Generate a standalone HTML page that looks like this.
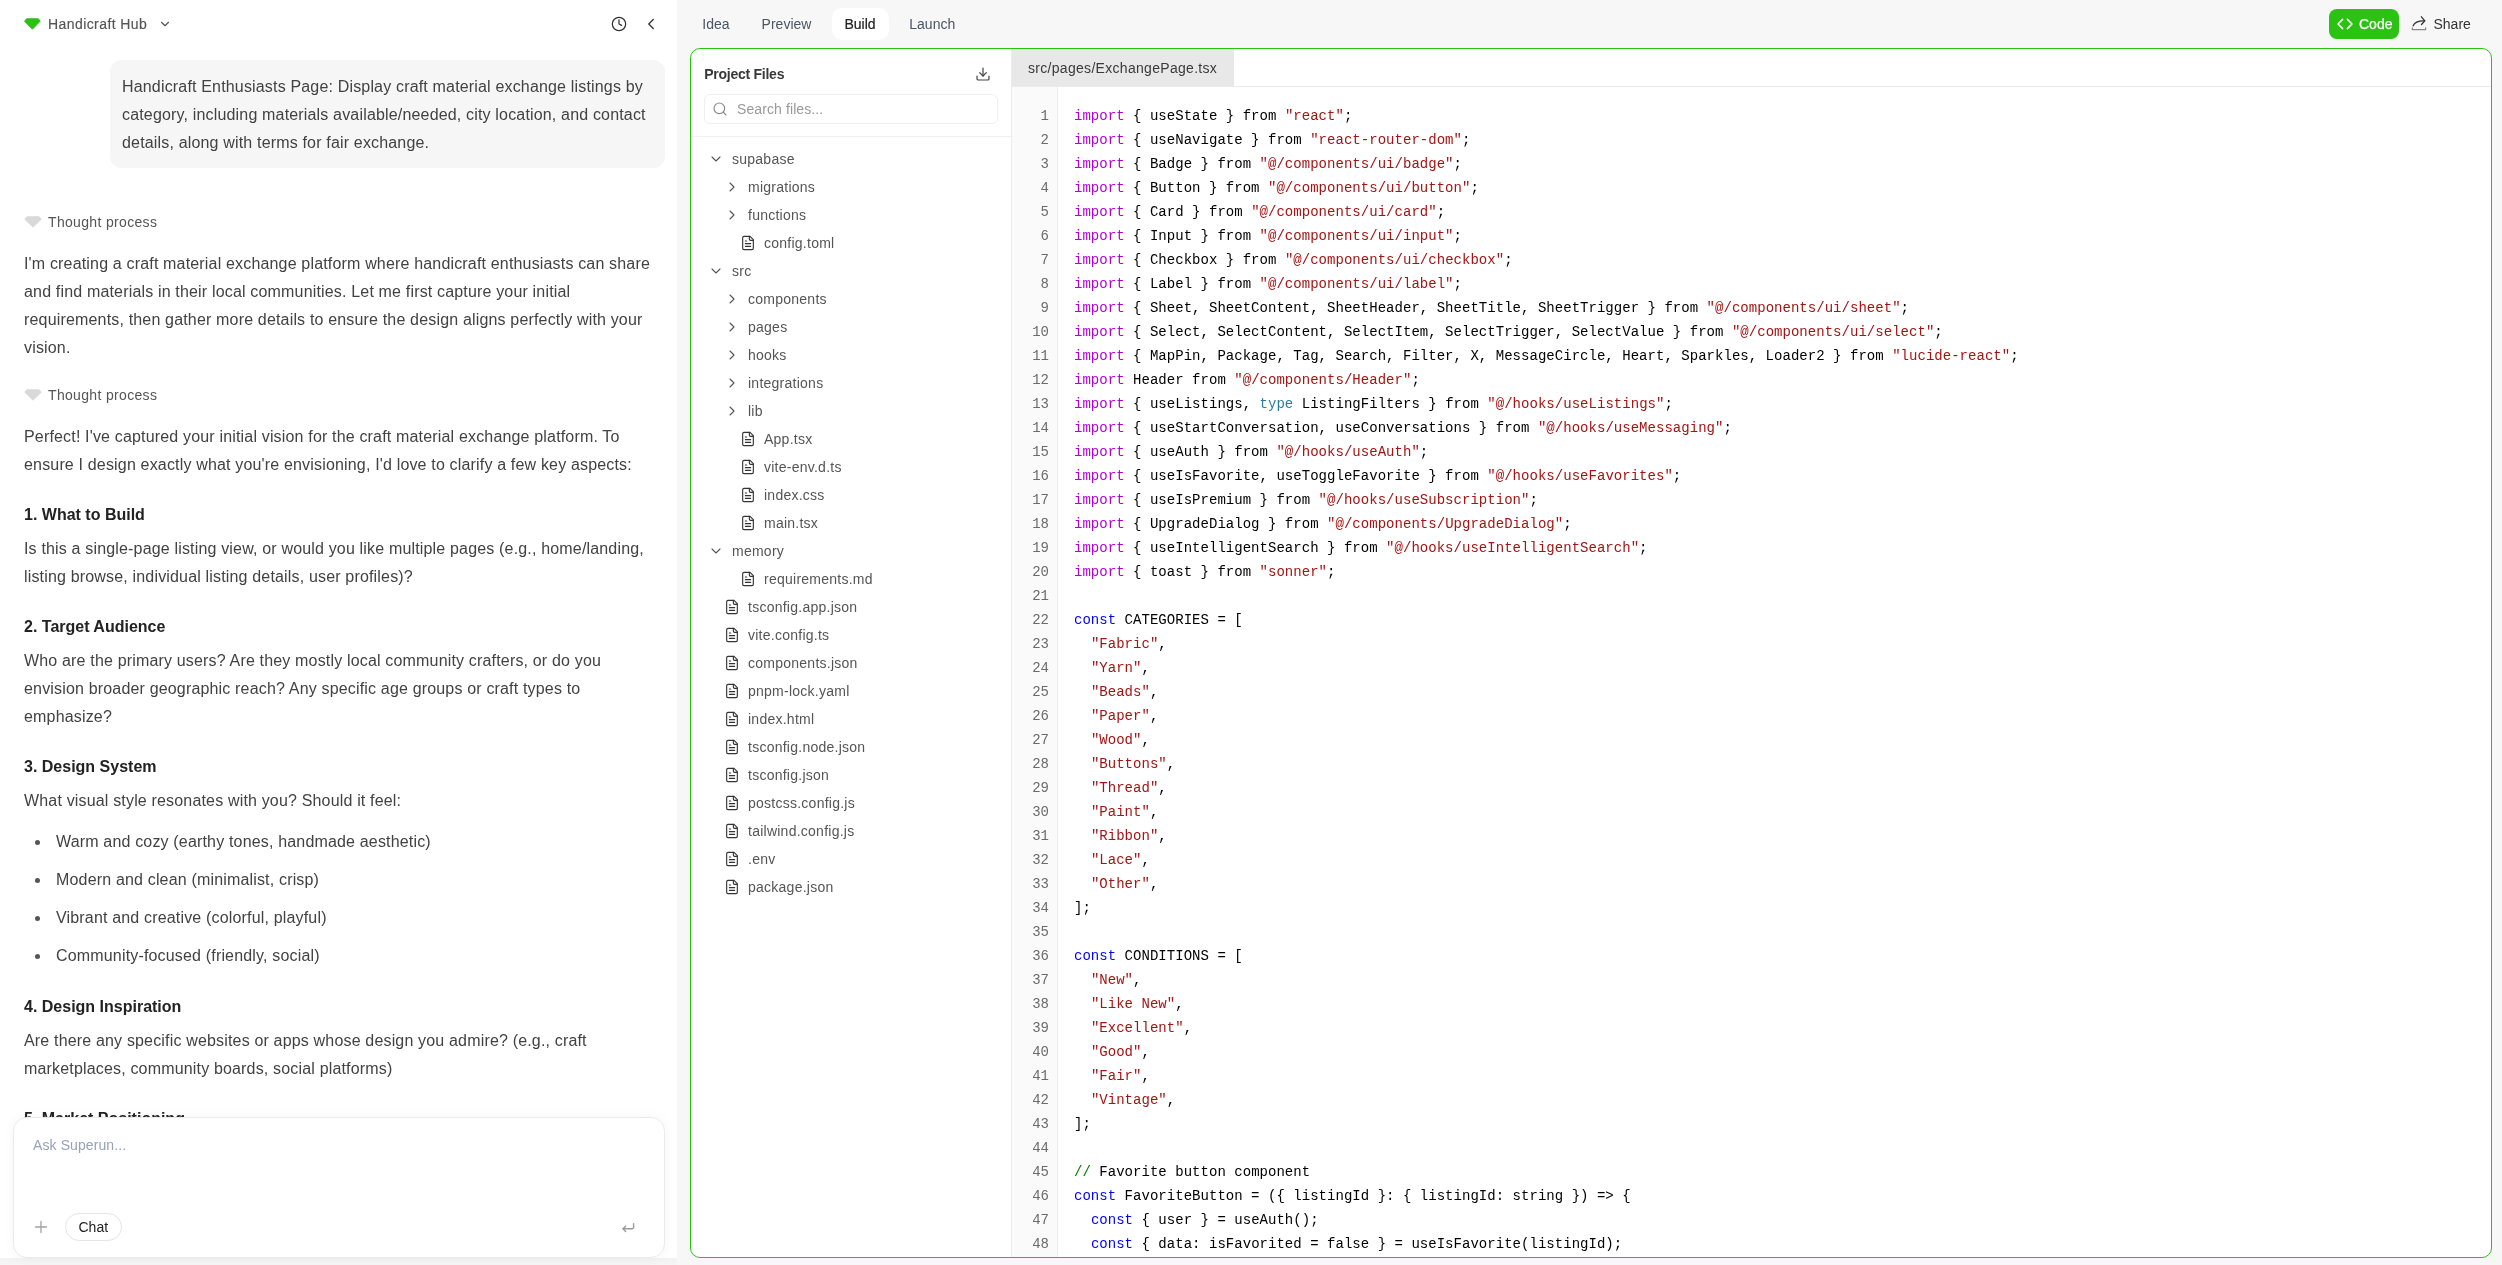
<!DOCTYPE html><html><head><meta charset="utf-8"><style>
*{box-sizing:border-box;margin:0;padding:0}
html,body{width:2502px;height:1265px;overflow:hidden;background:#fff}
body{font-family:"Liberation Sans",sans-serif;position:relative}
.a{position:absolute;white-space:nowrap}
.left{position:absolute;left:0;top:0;width:677px;height:1265px;background:#fff;overflow:hidden}
.right{position:absolute;left:677px;top:0;width:1825px;height:1265px;background:#f7f7f7}
.p{color:#424242;font-size:16px;line-height:28px;letter-spacing:0.17px}
.mono{font-family:"Liberation Mono",monospace;font-size:14px;line-height:24px;white-space:pre;letter-spacing:0.033px}
.k{color:#af00db}.s{color:#a31515}.c{color:#0000ff}.t{color:#267f99}.m{color:#008000}
.h{color:#222;font-size:16px;line-height:28px;font-weight:bold}
</style></head><body><div style="position:absolute;left:0;top:0;width:2502px;height:1265px;will-change:transform;overflow:hidden"><div class="left"><svg class="a" style="left:24px;top:18px" width="17" height="12" viewBox="0 0 17 12"><path d="M2.6 0.8 H14.4 L16.2 3.2 L8.4 11.2 L0.6 3.2 Z" fill="#2bc017" stroke="#2bc017" stroke-width="1" stroke-linejoin="round"/></svg><div class="a" style="left:48px;top:13.85px;font-size:14px;line-height:20px;color:#555;letter-spacing:0.42px;-webkit-text-stroke:0.15px #555">Handicraft Hub</div><svg class="a" style="left:158px;top:17px" width="14" height="14" viewBox="0 0 24 24" fill="none" stroke="#555" stroke-width="2" stroke-linecap="round" stroke-linejoin="round"><path d="m6 9 6 6 6-6"/></svg><svg class="a" style="left:611px;top:16px" width="16" height="16" viewBox="0 0 24 24" fill="none" stroke="#333" stroke-width="1.9" stroke-linecap="round" stroke-linejoin="round"><circle cx="12" cy="12" r="10"/><path d="M12 6v6l4 2"/></svg><svg class="a" style="left:641.5px;top:14.9px" width="18" height="18" viewBox="0 0 24 24" fill="none" stroke="#333" stroke-width="1.75" stroke-linecap="round" stroke-linejoin="round"><path d="m15 18-6-6 6-6"/></svg><div class="a" style="left:110px;top:60px;width:555px;height:108px;background:#f6f6f6;border-radius:12px"></div><div class="a p" style="left:122px;top:72.65px">Handicraft Enthusiasts Page: Display craft material exchange listings by<br>category, including materials available/needed, city location, and contact<br>details, along with terms for fair exchange.</div><svg class="a" style="left:24px;top:216px" width="18" height="12" viewBox="0 0 18 12"><path d="M2.8 0.8 H15.2 L17.2 3.2 L9 11.2 L0.8 3.2 Z" fill="#d9d9d9" stroke="#d9d9d9" stroke-width="1" stroke-linejoin="round"/></svg><div class="a" style="left:48px;top:211.85px;font-size:14px;line-height:20px;color:#555;letter-spacing:0.33px">Thought process</div><div class="a p" style="left:24px;top:249.85px">I&#x27;m creating a craft material exchange platform where handicraft enthusiasts can share<br>and find materials in their local communities. Let me first capture your initial<br>requirements, then gather more details to ensure the design aligns perfectly with your<br>vision.</div><svg class="a" style="left:24px;top:389px" width="18" height="12" viewBox="0 0 18 12"><path d="M2.8 0.8 H15.2 L17.2 3.2 L9 11.2 L0.8 3.2 Z" fill="#d9d9d9" stroke="#d9d9d9" stroke-width="1" stroke-linejoin="round"/></svg><div class="a" style="left:48px;top:385.15px;font-size:14px;line-height:20px;color:#555;letter-spacing:0.33px">Thought process</div><div class="a p" style="left:24px;top:422.85px">Perfect! I&#x27;ve captured your initial vision for the craft material exchange platform. To<br>ensure I design exactly what you&#x27;re envisioning, I&#x27;d love to clarify a few key aspects:</div><div class="a h" style="left:24px;top:501.15px">1. What to Build</div><div class="a p" style="left:24px;top:535.05px">Is this a single-page listing view, or would you like multiple pages (e.g., home/landing,<br>listing browse, individual listing details, user profiles)?</div><div class="a h" style="left:24px;top:612.65px">2. Target Audience</div><div class="a p" style="left:24px;top:646.65px">Who are the primary users? Are they mostly local community crafters, or do you<br>envision broader geographic reach? Any specific age groups or craft types to<br>emphasize?</div><div class="a h" style="left:24px;top:752.65px">3. Design System</div><div class="a p" style="left:24px;top:786.65px">What visual style resonates with you? Should it feel:</div><div class="a" style="left:35px;top:840.0px;width:5px;height:5px;border-radius:50%;background:#555"></div><div class="a p" style="left:56px;top:827.65px">Warm and cozy (earthy tones, handmade aesthetic)</div><div class="a" style="left:35px;top:878.0px;width:5px;height:5px;border-radius:50%;background:#555"></div><div class="a p" style="left:56px;top:865.65px">Modern and clean (minimalist, crisp)</div><div class="a" style="left:35px;top:916.0px;width:5px;height:5px;border-radius:50%;background:#555"></div><div class="a p" style="left:56px;top:903.65px">Vibrant and creative (colorful, playful)</div><div class="a" style="left:35px;top:954.0px;width:5px;height:5px;border-radius:50%;background:#555"></div><div class="a p" style="left:56px;top:941.65px">Community-focused (friendly, social)</div><div class="a h" style="left:24px;top:992.65px">4. Design Inspiration</div><div class="a p" style="left:24px;top:1026.65px">Are there any specific websites or apps whose design you admire? (e.g., craft<br>marketplaces, community boards, social platforms)</div><div class="a h" style="left:24px;top:1104.65px">5. Market Positioning</div><div class="a" style="left:0;top:1258px;width:677px;height:7px;background:linear-gradient(#f2f2f2,#f6f6f6)"></div><div class="a" style="left:12.5px;top:1116.5px;width:652px;height:141px;background:#fff;border:1px solid #ebebeb;border-radius:14px;box-shadow:0 0 12px rgba(0,0,0,0.045)"></div><div class="a" style="left:33px;top:1135.15px;font-size:14px;line-height:20px;color:#94a3b8;letter-spacing:0.1px">Ask Superun...</div><svg class="a" style="left:34px;top:1220px" width="14" height="14" viewBox="0 0 14 14" fill="none" stroke="#a3a3a3" stroke-width="1.3" stroke-linecap="round"><path d="M7 1.5v11M1.5 7h11"/></svg><div class="a" style="left:65px;top:1213px;width:57px;height:28px;border:1px solid #e5e5e5;border-radius:14px;background:#fff"></div><div class="a" style="left:78.5px;top:1217.35px;font-size:14px;line-height:20px;color:#222">Chat</div><svg class="a" style="left:620px;top:1221px" width="16" height="14" viewBox="0 0 16 14" fill="none" stroke="#9a9a9a" stroke-width="1.4" stroke-linecap="round" stroke-linejoin="round"><path d="M13.6 2.6v3.6a1.6 1.6 0 0 1-1.6 1.6H3.2"/><path d="M5.6 5.2 L3 7.8 L5.6 10.4"/></svg></div><div class="a" style="left:677px;top:0;width:1825px;height:1265px;background:#f7f7f7"></div><div class="a" style="left:832px;top:8px;width:57px;height:32px;background:#fff;border-radius:10px"></div><div class="a" style="left:702.3px;top:14.45px;font-size:14px;line-height:20px;color:#4b5563">Idea</div><div class="a" style="left:761.6px;top:14.45px;font-size:14px;line-height:20px;color:#4b5563">Preview</div><div class="a" style="left:844.4px;top:14.45px;font-size:14px;line-height:20px;color:#222;-webkit-text-stroke:0.2px #222">Build</div><div class="a" style="left:909.3px;top:14.45px;font-size:14px;line-height:20px;color:#4b5563">Launch</div><div class="a" style="left:2329px;top:9px;width:70px;height:30px;background:#2cc214;border-radius:8px"></div><svg class="a" style="left:2336px;top:16px" width="18" height="16" viewBox="0 0 18 16" fill="none" stroke="#fff" stroke-width="1.5" stroke-linecap="round" stroke-linejoin="round"><path d="M6.6 3.4 L2 8 L6.6 12.6"/><path d="M11.4 3.4 L16 8 L11.4 12.6"/></svg><div class="a" style="left:2359px;top:14.15px;font-size:14px;line-height:20px;color:#fff;-webkit-text-stroke:0.25px #fff">Code</div><svg class="a" style="left:2410px;top:15px" width="18" height="18" viewBox="0 0 18 18" fill="none" stroke="#333" stroke-width="1.3" stroke-linecap="round" stroke-linejoin="round"><path d="M3.2 10.8 C4.5 7.2 8 5.6 14.6 5.8"/><path d="M11.4 1.8 L14.8 5.9 L11.5 9.5"/><path d="M2.3 13 V14.6 H15.6 V13" stroke="#888"/></svg><div class="a" style="left:2433.5px;top:14.15px;font-size:14px;line-height:20px;color:#333">Share</div><div class="a" style="left:690px;top:48px;width:1802px;height:1210px;border:1px solid #2cc214;border-radius:10px;background:#fff;overflow:hidden"><div class="a" style="left:320px;top:0;width:1px;height:1210px;background:#ededed"></div><div class="a" style="left:13.200000000000045px;top:15.15px;font-size:14px;line-height:20px;color:#383838;font-weight:bold;letter-spacing:-0.25px">Project Files</div><svg class="a" style="left:284px;top:17px" width="16" height="16" viewBox="0 0 24 24" fill="none" stroke="#444" stroke-width="1.8" stroke-linecap="round" stroke-linejoin="round"><path d="M21 15v4a2 2 0 0 1-2 2H5a2 2 0 0 1-2-2v-4"/><path d="m7 10 5 5 5-5"/><path d="M12 15V3"/></svg><div class="a" style="left:13px;top:45px;width:294px;height:30px;border:1px solid #efefef;border-radius:6px"></div><svg class="a" style="left:20.5px;top:52px" width="16" height="16" viewBox="0 0 24 24" fill="none" stroke="#888" stroke-width="1.7" stroke-linecap="round" stroke-linejoin="round"><circle cx="11" cy="11" r="8"/><path d="m21 21-4.3-4.3"/></svg><div class="a" style="left:46px;top:50.15px;font-size:14px;line-height:20px;color:#999;letter-spacing:0.1px">Search files...</div><div class="a" style="left:0;top:87px;width:320px;height:1px;background:#f0f0f0"></div><svg class="a" style="left:17px;top:102px" width="16" height="16" viewBox="0 0 24 24" fill="none" stroke="#555" stroke-width="1.6" stroke-linecap="round" stroke-linejoin="round"><path d="m6 9 6 6 6-6"/></svg><div class="a" style="left:41px;top:99.85px;font-size:14px;line-height:20px;color:#555;letter-spacing:0.25px">supabase</div><svg class="a" style="left:33px;top:130px" width="16" height="16" viewBox="0 0 24 24" fill="none" stroke="#555" stroke-width="1.6" stroke-linecap="round" stroke-linejoin="round"><path d="m9 18 6-6-6-6"/></svg><div class="a" style="left:57px;top:127.85px;font-size:14px;line-height:20px;color:#555;letter-spacing:0.25px">migrations</div><svg class="a" style="left:33px;top:158px" width="16" height="16" viewBox="0 0 24 24" fill="none" stroke="#555" stroke-width="1.6" stroke-linecap="round" stroke-linejoin="round"><path d="m9 18 6-6-6-6"/></svg><div class="a" style="left:57px;top:155.85px;font-size:14px;line-height:20px;color:#555;letter-spacing:0.25px">functions</div><svg class="a" style="left:49px;top:186px" width="16" height="16" viewBox="0 0 24 24" fill="none" stroke="#333" stroke-width="1.7" stroke-linecap="round" stroke-linejoin="round"><path d="M15 2H6a2 2 0 0 0-2 2v16a2 2 0 0 0 2 2h12a2 2 0 0 0 2-2V7Z"/><path d="M14 2v4a2 2 0 0 0 2 2h4"/><path d="M10 9H8"/><path d="M16 13H8"/><path d="M16 17H8"/></svg><div class="a" style="left:73px;top:183.85px;font-size:14px;line-height:20px;color:#555;letter-spacing:0.25px">config.toml</div><svg class="a" style="left:17px;top:214px" width="16" height="16" viewBox="0 0 24 24" fill="none" stroke="#555" stroke-width="1.6" stroke-linecap="round" stroke-linejoin="round"><path d="m6 9 6 6 6-6"/></svg><div class="a" style="left:41px;top:211.85px;font-size:14px;line-height:20px;color:#555;letter-spacing:0.25px">src</div><svg class="a" style="left:33px;top:242px" width="16" height="16" viewBox="0 0 24 24" fill="none" stroke="#555" stroke-width="1.6" stroke-linecap="round" stroke-linejoin="round"><path d="m9 18 6-6-6-6"/></svg><div class="a" style="left:57px;top:239.85px;font-size:14px;line-height:20px;color:#555;letter-spacing:0.25px">components</div><svg class="a" style="left:33px;top:270px" width="16" height="16" viewBox="0 0 24 24" fill="none" stroke="#555" stroke-width="1.6" stroke-linecap="round" stroke-linejoin="round"><path d="m9 18 6-6-6-6"/></svg><div class="a" style="left:57px;top:267.85px;font-size:14px;line-height:20px;color:#555;letter-spacing:0.25px">pages</div><svg class="a" style="left:33px;top:298px" width="16" height="16" viewBox="0 0 24 24" fill="none" stroke="#555" stroke-width="1.6" stroke-linecap="round" stroke-linejoin="round"><path d="m9 18 6-6-6-6"/></svg><div class="a" style="left:57px;top:295.85px;font-size:14px;line-height:20px;color:#555;letter-spacing:0.25px">hooks</div><svg class="a" style="left:33px;top:326px" width="16" height="16" viewBox="0 0 24 24" fill="none" stroke="#555" stroke-width="1.6" stroke-linecap="round" stroke-linejoin="round"><path d="m9 18 6-6-6-6"/></svg><div class="a" style="left:57px;top:323.85px;font-size:14px;line-height:20px;color:#555;letter-spacing:0.25px">integrations</div><svg class="a" style="left:33px;top:354px" width="16" height="16" viewBox="0 0 24 24" fill="none" stroke="#555" stroke-width="1.6" stroke-linecap="round" stroke-linejoin="round"><path d="m9 18 6-6-6-6"/></svg><div class="a" style="left:57px;top:351.85px;font-size:14px;line-height:20px;color:#555;letter-spacing:0.25px">lib</div><svg class="a" style="left:49px;top:382px" width="16" height="16" viewBox="0 0 24 24" fill="none" stroke="#333" stroke-width="1.7" stroke-linecap="round" stroke-linejoin="round"><path d="M15 2H6a2 2 0 0 0-2 2v16a2 2 0 0 0 2 2h12a2 2 0 0 0 2-2V7Z"/><path d="M14 2v4a2 2 0 0 0 2 2h4"/><path d="M10 9H8"/><path d="M16 13H8"/><path d="M16 17H8"/></svg><div class="a" style="left:73px;top:379.85px;font-size:14px;line-height:20px;color:#555;letter-spacing:0.25px">App.tsx</div><svg class="a" style="left:49px;top:410px" width="16" height="16" viewBox="0 0 24 24" fill="none" stroke="#333" stroke-width="1.7" stroke-linecap="round" stroke-linejoin="round"><path d="M15 2H6a2 2 0 0 0-2 2v16a2 2 0 0 0 2 2h12a2 2 0 0 0 2-2V7Z"/><path d="M14 2v4a2 2 0 0 0 2 2h4"/><path d="M10 9H8"/><path d="M16 13H8"/><path d="M16 17H8"/></svg><div class="a" style="left:73px;top:407.85px;font-size:14px;line-height:20px;color:#555;letter-spacing:0.25px">vite-env.d.ts</div><svg class="a" style="left:49px;top:438px" width="16" height="16" viewBox="0 0 24 24" fill="none" stroke="#333" stroke-width="1.7" stroke-linecap="round" stroke-linejoin="round"><path d="M15 2H6a2 2 0 0 0-2 2v16a2 2 0 0 0 2 2h12a2 2 0 0 0 2-2V7Z"/><path d="M14 2v4a2 2 0 0 0 2 2h4"/><path d="M10 9H8"/><path d="M16 13H8"/><path d="M16 17H8"/></svg><div class="a" style="left:73px;top:435.85px;font-size:14px;line-height:20px;color:#555;letter-spacing:0.25px">index.css</div><svg class="a" style="left:49px;top:466px" width="16" height="16" viewBox="0 0 24 24" fill="none" stroke="#333" stroke-width="1.7" stroke-linecap="round" stroke-linejoin="round"><path d="M15 2H6a2 2 0 0 0-2 2v16a2 2 0 0 0 2 2h12a2 2 0 0 0 2-2V7Z"/><path d="M14 2v4a2 2 0 0 0 2 2h4"/><path d="M10 9H8"/><path d="M16 13H8"/><path d="M16 17H8"/></svg><div class="a" style="left:73px;top:463.85px;font-size:14px;line-height:20px;color:#555;letter-spacing:0.25px">main.tsx</div><svg class="a" style="left:17px;top:494px" width="16" height="16" viewBox="0 0 24 24" fill="none" stroke="#555" stroke-width="1.6" stroke-linecap="round" stroke-linejoin="round"><path d="m6 9 6 6 6-6"/></svg><div class="a" style="left:41px;top:491.85px;font-size:14px;line-height:20px;color:#555;letter-spacing:0.25px">memory</div><svg class="a" style="left:49px;top:522px" width="16" height="16" viewBox="0 0 24 24" fill="none" stroke="#333" stroke-width="1.7" stroke-linecap="round" stroke-linejoin="round"><path d="M15 2H6a2 2 0 0 0-2 2v16a2 2 0 0 0 2 2h12a2 2 0 0 0 2-2V7Z"/><path d="M14 2v4a2 2 0 0 0 2 2h4"/><path d="M10 9H8"/><path d="M16 13H8"/><path d="M16 17H8"/></svg><div class="a" style="left:73px;top:519.85px;font-size:14px;line-height:20px;color:#555;letter-spacing:0.25px">requirements.md</div><svg class="a" style="left:33px;top:550px" width="16" height="16" viewBox="0 0 24 24" fill="none" stroke="#333" stroke-width="1.7" stroke-linecap="round" stroke-linejoin="round"><path d="M15 2H6a2 2 0 0 0-2 2v16a2 2 0 0 0 2 2h12a2 2 0 0 0 2-2V7Z"/><path d="M14 2v4a2 2 0 0 0 2 2h4"/><path d="M10 9H8"/><path d="M16 13H8"/><path d="M16 17H8"/></svg><div class="a" style="left:57px;top:547.85px;font-size:14px;line-height:20px;color:#555;letter-spacing:0.25px">tsconfig.app.json</div><svg class="a" style="left:33px;top:578px" width="16" height="16" viewBox="0 0 24 24" fill="none" stroke="#333" stroke-width="1.7" stroke-linecap="round" stroke-linejoin="round"><path d="M15 2H6a2 2 0 0 0-2 2v16a2 2 0 0 0 2 2h12a2 2 0 0 0 2-2V7Z"/><path d="M14 2v4a2 2 0 0 0 2 2h4"/><path d="M10 9H8"/><path d="M16 13H8"/><path d="M16 17H8"/></svg><div class="a" style="left:57px;top:575.85px;font-size:14px;line-height:20px;color:#555;letter-spacing:0.25px">vite.config.ts</div><svg class="a" style="left:33px;top:606px" width="16" height="16" viewBox="0 0 24 24" fill="none" stroke="#333" stroke-width="1.7" stroke-linecap="round" stroke-linejoin="round"><path d="M15 2H6a2 2 0 0 0-2 2v16a2 2 0 0 0 2 2h12a2 2 0 0 0 2-2V7Z"/><path d="M14 2v4a2 2 0 0 0 2 2h4"/><path d="M10 9H8"/><path d="M16 13H8"/><path d="M16 17H8"/></svg><div class="a" style="left:57px;top:603.85px;font-size:14px;line-height:20px;color:#555;letter-spacing:0.25px">components.json</div><svg class="a" style="left:33px;top:634px" width="16" height="16" viewBox="0 0 24 24" fill="none" stroke="#333" stroke-width="1.7" stroke-linecap="round" stroke-linejoin="round"><path d="M15 2H6a2 2 0 0 0-2 2v16a2 2 0 0 0 2 2h12a2 2 0 0 0 2-2V7Z"/><path d="M14 2v4a2 2 0 0 0 2 2h4"/><path d="M10 9H8"/><path d="M16 13H8"/><path d="M16 17H8"/></svg><div class="a" style="left:57px;top:631.85px;font-size:14px;line-height:20px;color:#555;letter-spacing:0.25px">pnpm-lock.yaml</div><svg class="a" style="left:33px;top:662px" width="16" height="16" viewBox="0 0 24 24" fill="none" stroke="#333" stroke-width="1.7" stroke-linecap="round" stroke-linejoin="round"><path d="M15 2H6a2 2 0 0 0-2 2v16a2 2 0 0 0 2 2h12a2 2 0 0 0 2-2V7Z"/><path d="M14 2v4a2 2 0 0 0 2 2h4"/><path d="M10 9H8"/><path d="M16 13H8"/><path d="M16 17H8"/></svg><div class="a" style="left:57px;top:659.85px;font-size:14px;line-height:20px;color:#555;letter-spacing:0.25px">index.html</div><svg class="a" style="left:33px;top:690px" width="16" height="16" viewBox="0 0 24 24" fill="none" stroke="#333" stroke-width="1.7" stroke-linecap="round" stroke-linejoin="round"><path d="M15 2H6a2 2 0 0 0-2 2v16a2 2 0 0 0 2 2h12a2 2 0 0 0 2-2V7Z"/><path d="M14 2v4a2 2 0 0 0 2 2h4"/><path d="M10 9H8"/><path d="M16 13H8"/><path d="M16 17H8"/></svg><div class="a" style="left:57px;top:687.85px;font-size:14px;line-height:20px;color:#555;letter-spacing:0.25px">tsconfig.node.json</div><svg class="a" style="left:33px;top:718px" width="16" height="16" viewBox="0 0 24 24" fill="none" stroke="#333" stroke-width="1.7" stroke-linecap="round" stroke-linejoin="round"><path d="M15 2H6a2 2 0 0 0-2 2v16a2 2 0 0 0 2 2h12a2 2 0 0 0 2-2V7Z"/><path d="M14 2v4a2 2 0 0 0 2 2h4"/><path d="M10 9H8"/><path d="M16 13H8"/><path d="M16 17H8"/></svg><div class="a" style="left:57px;top:715.85px;font-size:14px;line-height:20px;color:#555;letter-spacing:0.25px">tsconfig.json</div><svg class="a" style="left:33px;top:746px" width="16" height="16" viewBox="0 0 24 24" fill="none" stroke="#333" stroke-width="1.7" stroke-linecap="round" stroke-linejoin="round"><path d="M15 2H6a2 2 0 0 0-2 2v16a2 2 0 0 0 2 2h12a2 2 0 0 0 2-2V7Z"/><path d="M14 2v4a2 2 0 0 0 2 2h4"/><path d="M10 9H8"/><path d="M16 13H8"/><path d="M16 17H8"/></svg><div class="a" style="left:57px;top:743.85px;font-size:14px;line-height:20px;color:#555;letter-spacing:0.25px">postcss.config.js</div><svg class="a" style="left:33px;top:774px" width="16" height="16" viewBox="0 0 24 24" fill="none" stroke="#333" stroke-width="1.7" stroke-linecap="round" stroke-linejoin="round"><path d="M15 2H6a2 2 0 0 0-2 2v16a2 2 0 0 0 2 2h12a2 2 0 0 0 2-2V7Z"/><path d="M14 2v4a2 2 0 0 0 2 2h4"/><path d="M10 9H8"/><path d="M16 13H8"/><path d="M16 17H8"/></svg><div class="a" style="left:57px;top:771.85px;font-size:14px;line-height:20px;color:#555;letter-spacing:0.25px">tailwind.config.js</div><svg class="a" style="left:33px;top:802px" width="16" height="16" viewBox="0 0 24 24" fill="none" stroke="#333" stroke-width="1.7" stroke-linecap="round" stroke-linejoin="round"><path d="M15 2H6a2 2 0 0 0-2 2v16a2 2 0 0 0 2 2h12a2 2 0 0 0 2-2V7Z"/><path d="M14 2v4a2 2 0 0 0 2 2h4"/><path d="M10 9H8"/><path d="M16 13H8"/><path d="M16 17H8"/></svg><div class="a" style="left:57px;top:799.85px;font-size:14px;line-height:20px;color:#555;letter-spacing:0.25px">.env</div><svg class="a" style="left:33px;top:830px" width="16" height="16" viewBox="0 0 24 24" fill="none" stroke="#333" stroke-width="1.7" stroke-linecap="round" stroke-linejoin="round"><path d="M15 2H6a2 2 0 0 0-2 2v16a2 2 0 0 0 2 2h12a2 2 0 0 0 2-2V7Z"/><path d="M14 2v4a2 2 0 0 0 2 2h4"/><path d="M10 9H8"/><path d="M16 13H8"/><path d="M16 17H8"/></svg><div class="a" style="left:57px;top:827.85px;font-size:14px;line-height:20px;color:#555;letter-spacing:0.25px">package.json</div><div class="a" style="left:320.5px;top:0;width:222px;height:37px;background:#e8e8e8"></div><div class="a" style="left:337px;top:9.15px;font-size:14px;line-height:20px;color:#3a3a3a;letter-spacing:0.3px">src/pages/ExchangePage.tsx</div><div class="a" style="left:321px;top:37px;width:1500px;height:1px;background:#ececec"></div><div class="a" style="left:321px;top:38px;width:46px;height:1200px;background:#fafafa;border-right:1px solid #efefef"></div><div class="a mono" style="left:321px;top:55.17px;width:37px;text-align:right;color:#6b6b6b">1<br>2<br>3<br>4<br>5<br>6<br>7<br>8<br>9<br>10<br>11<br>12<br>13<br>14<br>15<br>16<br>17<br>18<br>19<br>20<br>21<br>22<br>23<br>24<br>25<br>26<br>27<br>28<br>29<br>30<br>31<br>32<br>33<br>34<br>35<br>36<br>37<br>38<br>39<br>40<br>41<br>42<br>43<br>44<br>45<br>46<br>47<br>48</div><div class="a mono" style="left:383px;top:55.17px;color:#000"><span class="k">import</span> { useState } from <span class="s">&quot;react&quot;</span>;<br><span class="k">import</span> { useNavigate } from <span class="s">&quot;react-router-dom&quot;</span>;<br><span class="k">import</span> { Badge } from <span class="s">&quot;@/components/ui/badge&quot;</span>;<br><span class="k">import</span> { Button } from <span class="s">&quot;@/components/ui/button&quot;</span>;<br><span class="k">import</span> { Card } from <span class="s">&quot;@/components/ui/card&quot;</span>;<br><span class="k">import</span> { Input } from <span class="s">&quot;@/components/ui/input&quot;</span>;<br><span class="k">import</span> { Checkbox } from <span class="s">&quot;@/components/ui/checkbox&quot;</span>;<br><span class="k">import</span> { Label } from <span class="s">&quot;@/components/ui/label&quot;</span>;<br><span class="k">import</span> { Sheet, SheetContent, SheetHeader, SheetTitle, SheetTrigger } from <span class="s">&quot;@/components/ui/sheet&quot;</span>;<br><span class="k">import</span> { Select, SelectContent, SelectItem, SelectTrigger, SelectValue } from <span class="s">&quot;@/components/ui/select&quot;</span>;<br><span class="k">import</span> { MapPin, Package, Tag, Search, Filter, X, MessageCircle, Heart, Sparkles, Loader2 } from <span class="s">&quot;lucide-react&quot;</span>;<br><span class="k">import</span> Header from <span class="s">&quot;@/components/Header&quot;</span>;<br><span class="k">import</span> { useListings, <span class="t">type</span> ListingFilters } from <span class="s">&quot;@/hooks/useListings&quot;</span>;<br><span class="k">import</span> { useStartConversation, useConversations } from <span class="s">&quot;@/hooks/useMessaging&quot;</span>;<br><span class="k">import</span> { useAuth } from <span class="s">&quot;@/hooks/useAuth&quot;</span>;<br><span class="k">import</span> { useIsFavorite, useToggleFavorite } from <span class="s">&quot;@/hooks/useFavorites&quot;</span>;<br><span class="k">import</span> { useIsPremium } from <span class="s">&quot;@/hooks/useSubscription&quot;</span>;<br><span class="k">import</span> { UpgradeDialog } from <span class="s">&quot;@/components/UpgradeDialog&quot;</span>;<br><span class="k">import</span> { useIntelligentSearch } from <span class="s">&quot;@/hooks/useIntelligentSearch&quot;</span>;<br><span class="k">import</span> { toast } from <span class="s">&quot;sonner&quot;</span>;<br><br><span class="c">const</span> CATEGORIES = [<br>  <span class="s">&quot;Fabric&quot;</span>,<br>  <span class="s">&quot;Yarn&quot;</span>,<br>  <span class="s">&quot;Beads&quot;</span>,<br>  <span class="s">&quot;Paper&quot;</span>,<br>  <span class="s">&quot;Wood&quot;</span>,<br>  <span class="s">&quot;Buttons&quot;</span>,<br>  <span class="s">&quot;Thread&quot;</span>,<br>  <span class="s">&quot;Paint&quot;</span>,<br>  <span class="s">&quot;Ribbon&quot;</span>,<br>  <span class="s">&quot;Lace&quot;</span>,<br>  <span class="s">&quot;Other&quot;</span>,<br>];<br><br><span class="c">const</span> CONDITIONS = [<br>  <span class="s">&quot;New&quot;</span>,<br>  <span class="s">&quot;Like New&quot;</span>,<br>  <span class="s">&quot;Excellent&quot;</span>,<br>  <span class="s">&quot;Good&quot;</span>,<br>  <span class="s">&quot;Fair&quot;</span>,<br>  <span class="s">&quot;Vintage&quot;</span>,<br>];<br><br><span class="m">//</span> Favorite button component<br><span class="c">const</span> FavoriteButton = ({ listingId }: { listingId: string }) =&gt; {<br>  <span class="c">const</span> { user } = useAuth();<br>  <span class="c">const</span> { data: isFavorited = false } = useIsFavorite(listingId);</div></div></div></body></html>
